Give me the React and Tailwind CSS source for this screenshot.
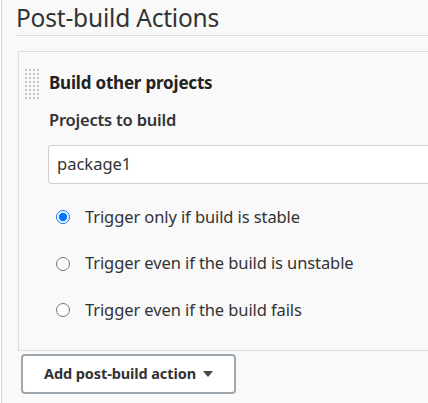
import React from "react";

function DragHandle() {
  const dots = [];
  for (let r = 0; r < 8; r++) {
    for (let c = 0; c < 4; c++) {
      dots.push(<rect key={`${r}-${c}`} x={c * 4} y={r * 4} width="2" height="2" fill="#c8c8c8" />);
    }
  }
  return (
    <svg width="15" height="30" viewBox="0 0 15 30" className="shrink-0">
      {dots}
    </svg>
  );
}

function Radio({ checked, label }) {
  return (
    <label className="flex items-center h-[22px]">
      <input
        type="radio"
        name="trigger"
        defaultChecked={checked}
        className="w-[14px] h-[14px] m-0 ml-[37px] accent-[#0075ff]"
      />
      <span className="ml-[15px] text-[16.5px] text-[#333] tracking-[-0.1px]">{label}</span>
    </label>
  );
}

export default function App() {
  return (
    <div
      className="w-[428px] h-[403px] bg-white overflow-hidden"
      style={{ fontFamily: '"Noto Sans", "Open Sans", sans-serif' }}
    >
      <div className="ml-[1px] h-full border-l border-[#d4d4d4] bg-[#f9f9f9] pl-[14px]">
        <div className="pt-[1px] h-[36px] border-b border-[#dcdcdc] text-[24.5px] leading-[34px] text-[#333] tracking-[-0.2px]">
          Post-build Actions
        </div>
        <div className="mt-[15px] ml-[2px] h-[300px] border border-r-0 border-[#dcdcdc] bg-[#f9f9f9]">
          <div className="flex items-start pt-[17px] pl-[6px]">
            <DragHandle />
            <div className="ml-[9px] flex-1">
              <div className="mt-[1px] text-[17px] font-bold leading-[26px] text-[#222] tracking-[-0.2px]">
                Build other projects
              </div>
              <div className="mt-[12px] text-[16.5px] font-semibold leading-[24px] text-[#333] tracking-[-0.2px]">
                Projects to build
              </div>
              <div className="mt-[13px] -ml-[1px] h-[39px] rounded-l-[4px] border border-r-0 border-[#cfcfcf] bg-white flex items-center pl-[8px] text-[16.5px] text-[#333]">
                package1
              </div>
            </div>
          </div>
          <div className="mt-[22px] flex flex-col gap-[24.5px]">
            <Radio checked label="Trigger only if build is stable" />
            <Radio label="Trigger even if the build is unstable" />
            <Radio label="Trigger even if the build fails" />
          </div>
        </div>
        <button className="mt-[3px] ml-[5px] w-[215px] h-[40px] rounded-[4px] border-2 border-[#9ea7ae] bg-white flex items-center justify-center text-[14.5px] font-bold text-[#333] tracking-[-0.1px]">
          Add post-build action
          <svg width="10" height="6" viewBox="0 0 10 6" className="ml-[7px]">
            <path d="M0 0 L10 0 L5 6 Z" fill="#444" />
          </svg>
        </button>
      </div>
    </div>
  );
}
